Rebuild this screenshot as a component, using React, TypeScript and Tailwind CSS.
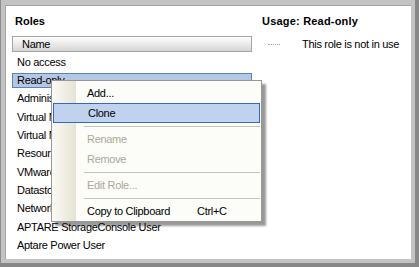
import React from "react";

const roles = [
  "No access",
  "Read-only",
  "Administrator",
  "Virtual Machine Power User",
  "Virtual Machine User",
  "Resource Pool Administrator",
  "VMware Consolidated Backup User",
  "Datastore Consumer",
  "Network Consumer",
  "APTARE StorageConsole User",
  "Aptare Power User",
];

type Item = { label?: string; shortcut?: string; disabled?: boolean; active?: boolean; sep?: boolean };

const menu: Item[] = [
  { label: "Add..." },
  { label: "Clone", active: true },
  { sep: true },
  { label: "Rename", disabled: true },
  { label: "Remove", disabled: true },
  { sep: true },
  { label: "Edit Role...", disabled: true },
  { sep: true },
  { label: "Copy to Clipboard", shortcut: "Ctrl+C" },
];

export default function App() {
  return (
    <div
      className="relative w-[419px] h-[267px] overflow-hidden bg-[#c3c3c3] border-l border-l-[#8c8c8c] border-r-4 border-r-[#878787] border-b-4 border-b-[#878787] pt-[5px] pl-[4px] pr-[4px] pb-[4px] text-[11px] text-black tracking-[-0.3px]"
      style={{ fontFamily: '"Liberation Sans", Arial, sans-serif' }}
    >
      <div className="w-full h-full bg-white border-t border-l border-[#a3a3a3] flex">
        {/* Left column */}
        <div className="w-[240px] ml-[6px] flex flex-col">
          <div className="mt-[8px] h-[14px] leading-[14px] pl-[3px] font-bold tracking-normal">Roles</div>
          <div className="mt-[8px] h-[16px] border border-[#a6a6a6] bg-gradient-to-b from-white to-[#d5d5d5] pl-[9px] leading-[14px]">
            Name
          </div>
          <div className="mt-[1px] flex flex-col">
            {roles.map((r, i) => (
              <div key={r} className="h-[18.3px] flex items-center">
                {i === 1 ? (
                  <div className="w-full h-[15px] border border-[#5a82c0] bg-[#b4c8e4] pl-[4px] leading-[13px] whitespace-nowrap">
                    {r}
                  </div>
                ) : (
                  <div className="pl-[5px] whitespace-nowrap">{r}</div>
                )}
              </div>
            ))}
          </div>
        </div>
        {/* Right column */}
        <div className="ml-[10px] flex flex-col">
          <div className="mt-[8px] h-[14px] leading-[14px] font-bold whitespace-nowrap tracking-[0.2px]">Usage: Read-only</div>
          <div className="mt-[8px] h-[16px] flex items-center">
            <div className="ml-[6px] w-[12px] border-t border-dotted border-[#a0a0a0]" />
            <div className="ml-[22px] whitespace-nowrap">This role is not in use</div>
          </div>
        </div>
      </div>

      {/* Context menu */}
      <div className="absolute left-[50px] top-[80px] w-[211px] border border-[#979797] bg-[#fcfcf9] shadow-[4px_4px_2px_rgba(0,0,0,0.4)] flex">
        <div className="absolute left-0 top-0 bottom-0 w-[24px] bg-gradient-to-r from-[#fbfaf5] to-[#e6e3d4]" />
        <div className="relative w-full pt-[2px] pb-0 flex flex-col">
          {menu.map((m, i) =>
            m.sep ? (
              <div key={i} className="h-[6px] flex items-center pl-[32px] pr-[1px]">
                <div className="w-full h-px bg-[#c5c2b8]" />
              </div>
            ) : (
              <div key={i} className="h-[20px] px-[1px] flex">
                <div
                  className={
                    "w-full h-[20px] flex items-center pl-[34px] " +
                    (m.active ? "border border-[#316ac5] bg-[#c1d2ee] pl-[33px]" : "") +
                    (m.disabled ? " text-[#aca899]" : "")
                  }
                >
                  <span className="w-[110px] whitespace-nowrap">{m.label}</span>
                  {m.shortcut && <span className="whitespace-nowrap">{m.shortcut}</span>}
                </div>
              </div>
            )
          )}
        </div>
      </div>
    </div>
  );
}
